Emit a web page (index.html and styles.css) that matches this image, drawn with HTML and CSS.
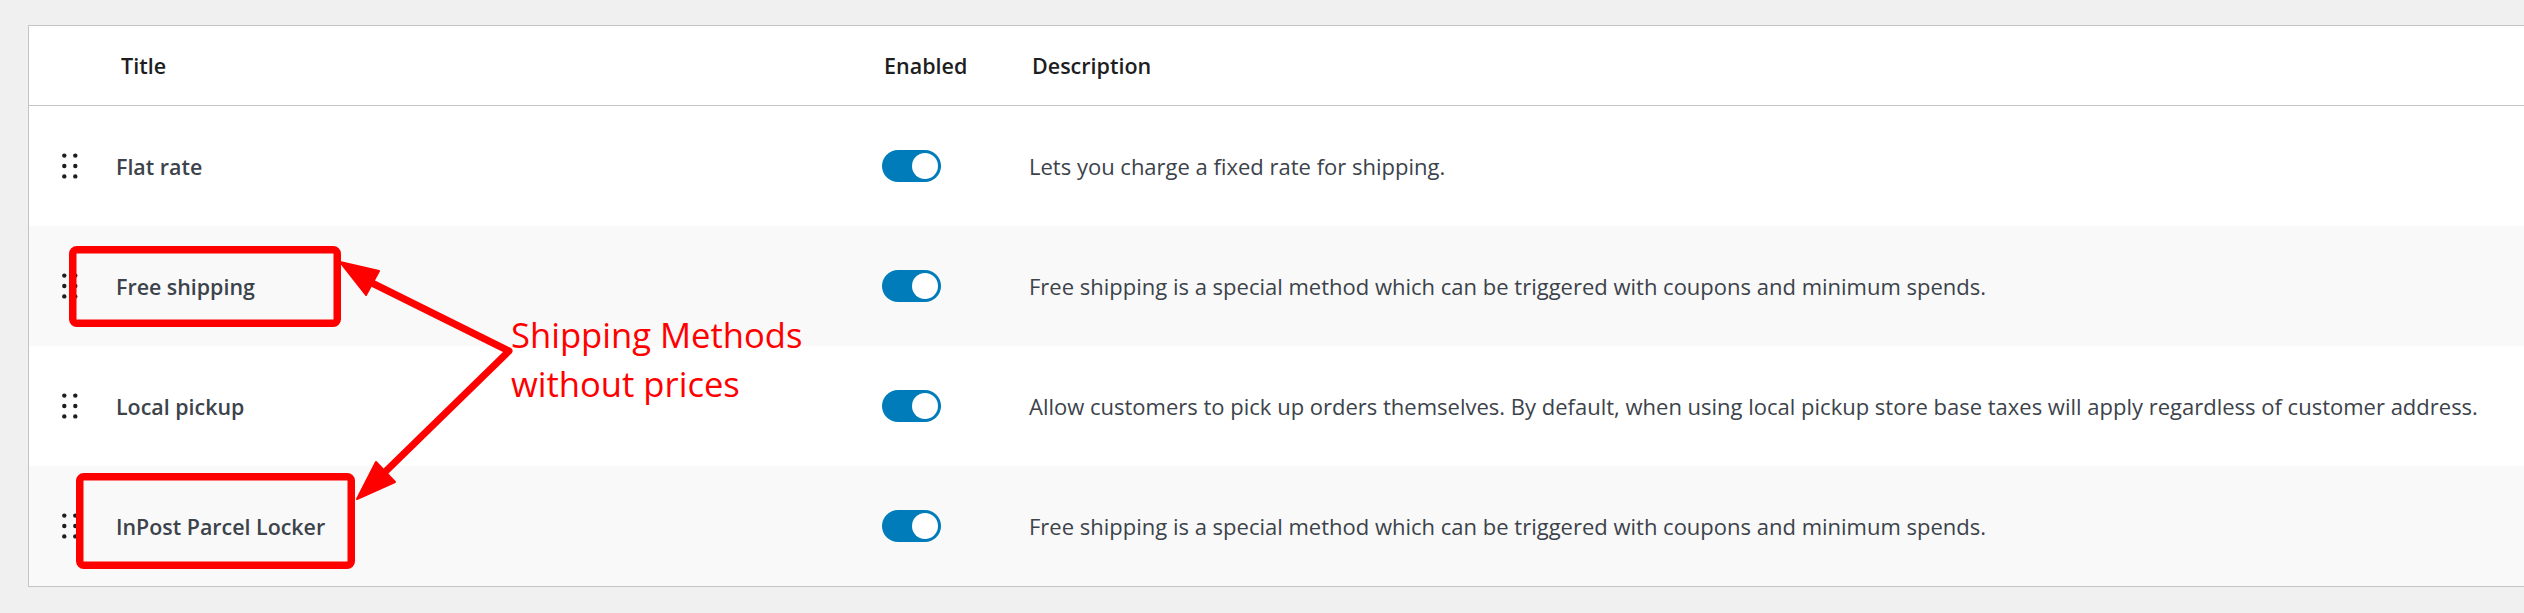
FILE: index.html
```html
<!DOCTYPE html>
<html lang="en">
<head>
<meta charset="utf-8">
<title>Shipping methods</title>
<link rel="stylesheet" href="styles.css">
</head>
<body>
<div class="page">
  <div class="methods">
    <div class="row head">
      <div class="cell"></div>
      <div class="cell th th-title">Title</div>
      <div class="cell th th-enabled">Enabled</div>
      <div class="cell th th-desc">Description</div>
    </div>
    <div class="row">
      <div class="cell handle"><svg class="dots" width="16" height="26" viewBox="0 0 16 26"><circle cx="2.3" cy="2.6" r="2.2"/><circle cx="13.3" cy="2.6" r="2.2"/><circle cx="2.3" cy="13" r="2.2"/><circle cx="13.3" cy="13" r="2.2"/><circle cx="2.3" cy="23.4" r="2.2"/><circle cx="13.3" cy="23.4" r="2.2"/></svg></div>
      <div class="cell title">Flat rate</div>
      <div class="cell"><span class="toggle"><span class="knob"></span></span></div>
      <div class="cell desc">Lets you charge a fixed rate for shipping.</div>
    </div>
    <div class="row alt">
      <div class="cell handle"><svg class="dots" width="16" height="26" viewBox="0 0 16 26"><circle cx="2.3" cy="2.6" r="2.2"/><circle cx="13.3" cy="2.6" r="2.2"/><circle cx="2.3" cy="13" r="2.2"/><circle cx="13.3" cy="13" r="2.2"/><circle cx="2.3" cy="23.4" r="2.2"/><circle cx="13.3" cy="23.4" r="2.2"/></svg></div>
      <div class="cell title">Free shipping</div>
      <div class="cell"><span class="toggle"><span class="knob"></span></span></div>
      <div class="cell desc">Free shipping is a special method which can be triggered with coupons and minimum spends.</div>
    </div>
    <div class="row">
      <div class="cell handle"><svg class="dots" width="16" height="26" viewBox="0 0 16 26"><circle cx="2.3" cy="2.6" r="2.2"/><circle cx="13.3" cy="2.6" r="2.2"/><circle cx="2.3" cy="13" r="2.2"/><circle cx="13.3" cy="13" r="2.2"/><circle cx="2.3" cy="23.4" r="2.2"/><circle cx="13.3" cy="23.4" r="2.2"/></svg></div>
      <div class="cell title">Local pickup</div>
      <div class="cell"><span class="toggle"><span class="knob"></span></span></div>
      <div class="cell desc">Allow customers to pick up orders themselves. By default, when using local pickup store base taxes will apply regardless of customer address.</div>
    </div>
    <div class="row alt">
      <div class="cell handle"><svg class="dots" width="16" height="26" viewBox="0 0 16 26"><circle cx="2.3" cy="2.6" r="2.2"/><circle cx="13.3" cy="2.6" r="2.2"/><circle cx="2.3" cy="13" r="2.2"/><circle cx="13.3" cy="13" r="2.2"/><circle cx="2.3" cy="23.4" r="2.2"/><circle cx="13.3" cy="23.4" r="2.2"/></svg></div>
      <div class="cell title">InPost Parcel Locker</div>
      <div class="cell"><span class="toggle"><span class="knob"></span></span></div>
      <div class="cell desc">Free shipping is a special method which can be triggered with coupons and minimum spends.</div>
    </div>
  </div>

  <svg class="marks" width="2524" height="613" viewBox="0 0 2524 613">
    <rect x="72.75" y="249.75" width="264.5" height="73.5" rx="4"/>
    <rect x="79.75" y="476.75" width="271.5" height="88.5" rx="4"/>
    <polyline points="372,283 509,351 385,472"/>
    <polygon points="340,262 379,271 366,295"/>
    <polygon points="357,499 376,462 395,482"/>
  </svg>
  <div class="note">Shipping Methods<br>without prices</div>
</div>
</body>
</html>
```
FILE: styles.css
```css
html, body {
  margin: 0;
  padding: 0;
}
body {
  background: #f0f0f0;
  overflow: hidden;
  font-family: "Open Sans", "Noto Sans", sans-serif;
  height: 613px;
}
.page {
  position: relative;
  height: 613px;
  padding-top: 25px;
  box-sizing: border-box;
}
.methods {
  margin: 0 -20px 0 28px;
  background: #fff;
  border: 1px solid #c3c4c7;
  border-right: none;
}
.row {
  display: grid;
  grid-template-columns: 87px 766px 147px 1fr;
  align-items: center;
  height: 120px;
}
.row.alt {
  background: #f9f9f9;
}
.row.head {
  height: 79px;
  border-bottom: 1px solid #c3c4c7;
}
.th {
  font-size: 21.5px;
  font-weight: 600;
  color: #1e1e1e;
  white-space: nowrap;
}
.th-title { padding-left: 5px; }
.th-enabled { padding-left: 2px; }
.th-desc { padding-left: 3px; }
.handle {
  padding-left: 33px;
  display: flex;
  align-items: center;
  height: 26px;
}
.dots circle {
  fill: #1e1e1e;
}
.title {
  font-size: 21.4px;
  font-weight: 600;
  color: #3c434a;
  white-space: nowrap;
}
.desc {
  font-size: 22px;
  color: #3c434a;
  white-space: nowrap;
}
.toggle {
  display: flex;
  align-items: center;
  justify-content: flex-end;
  width: 59px;
  height: 32px;
  border-radius: 16px;
  background: #007cba;
  padding: 0 3px;
  box-sizing: border-box;
}
.knob {
  width: 26px;
  height: 26px;
  border-radius: 50%;
  background: #fff;
}
.marks {
  position: absolute;
  left: 0;
  top: 0;
  pointer-events: none;
}
.marks rect {
  fill: none;
  stroke: #ff0000;
  stroke-width: 7.5;
}
.marks polyline {
  fill: none;
  stroke: #ff0000;
  stroke-width: 7;
  stroke-linejoin: round;
  stroke-linecap: butt;
}
.marks polygon {
  fill: #ff0000;
  stroke: #ff0000;
  stroke-width: 2;
  stroke-linejoin: round;
}
.note {
  position: absolute;
  left: 511px;
  top: 310px;
  font-size: 34.6px;
  line-height: 49px;
  color: #ff0000;
  white-space: nowrap;
}
```
